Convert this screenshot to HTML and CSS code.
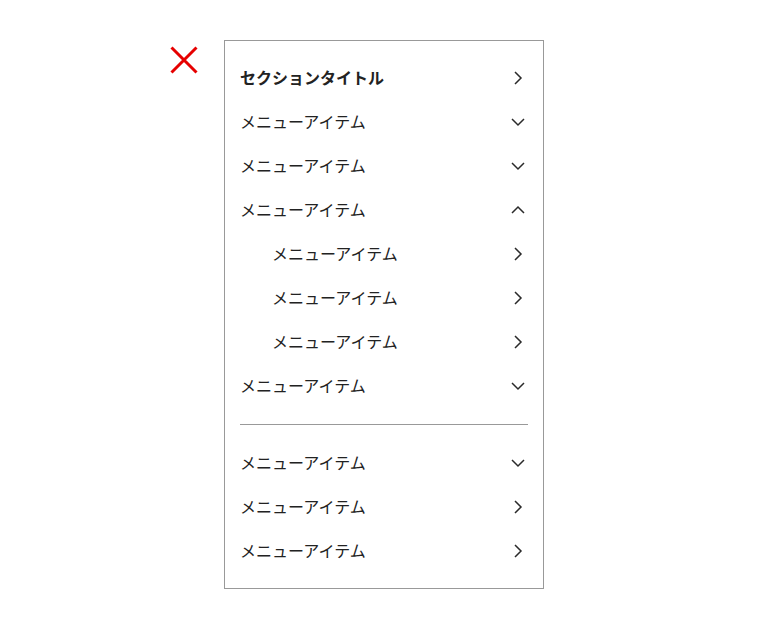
FILE: index.html
```html
<!DOCTYPE html>
<html lang="ja">
<head>
<meta charset="utf-8">
<title>Menu</title>
<link rel="stylesheet" href="styles.css">
</head>
<body>
<div class="page">
  <button class="close" aria-label="閉じる">
    <svg width="28" height="28" viewBox="0 0 28 28"><path d="M1.5 1.5 L26.5 26.5 M26.5 1.5 L1.5 26.5" stroke="#e60000" stroke-width="3" fill="none"/></svg>
  </button>
  <nav class="panel">
    <ul class="menu">
      <li class="row title"><span>セクションタイトル</span><svg class="ic" viewBox="0 0 20 20"><path d="M7 4 L13 10 L7 16"/></svg></li>
      <li class="row"><span>メニューアイテム</span><svg class="ic" viewBox="0 0 20 20"><path d="M4 7 L10 13 L16 7"/></svg></li>
      <li class="row"><span>メニューアイテム</span><svg class="ic" viewBox="0 0 20 20"><path d="M4 7 L10 13 L16 7"/></svg></li>
      <li class="row"><span>メニューアイテム</span><svg class="ic" viewBox="0 0 20 20"><path d="M4 13 L10 7 L16 13"/></svg></li>
      <li class="row sub"><span>メニューアイテム</span><svg class="ic" viewBox="0 0 20 20"><path d="M7 4 L13 10 L7 16"/></svg></li>
      <li class="row sub"><span>メニューアイテム</span><svg class="ic" viewBox="0 0 20 20"><path d="M7 4 L13 10 L7 16"/></svg></li>
      <li class="row sub"><span>メニューアイテム</span><svg class="ic" viewBox="0 0 20 20"><path d="M7 4 L13 10 L7 16"/></svg></li>
      <li class="row"><span>メニューアイテム</span><svg class="ic" viewBox="0 0 20 20"><path d="M4 7 L10 13 L16 7"/></svg></li>
    </ul>
    <hr class="divider">
    <ul class="menu">
      <li class="row"><span>メニューアイテム</span><svg class="ic" viewBox="0 0 20 20"><path d="M4 7 L10 13 L16 7"/></svg></li>
      <li class="row"><span>メニューアイテム</span><svg class="ic" viewBox="0 0 20 20"><path d="M7 4 L13 10 L7 16"/></svg></li>
      <li class="row"><span>メニューアイテム</span><svg class="ic" viewBox="0 0 20 20"><path d="M7 4 L13 10 L7 16"/></svg></li>
    </ul>
  </nav>
</div>
</body>
</html>
```
FILE: styles.css
```css
html, body {
  margin: 0;
  padding: 0;
  background: #fff;
}
body {
  font-family: "Noto Sans CJK JP", "Noto Sans", sans-serif;
  color: #222;
}
.page {
  display: flex;
  align-items: flex-start;
  gap: 26px;
  padding: 40px 0 0 170px;
}
.close {
  margin-top: 6px;
  padding: 0;
  border: 0;
  background: none;
  width: 28px;
  height: 28px;
  display: block;
}
.close svg { display: block; }
.panel {
  border: 1px solid #999;
  padding: 15px;
  box-sizing: content-box;
  width: 288px;
}
.menu {
  list-style: none;
  margin: 0;
  padding: 0;
}
.row {
  height: 44px;
  display: flex;
  align-items: center;
  justify-content: space-between;
  font-size: 16px;
  line-height: 1;
}
.row span { padding-bottom: 2px; }
.row.title { font-weight: 700; }
.row.sub { padding-left: 32px; }
.ic {
  width: 20px;
  height: 20px;
  flex: none;
  fill: none;
  stroke: #2a2a2a;
  stroke-width: 1.5;
}
.divider {
  margin: 16px 0;
  border: 0;
  border-top: 1px solid #999;
  height: 0;
}
```
